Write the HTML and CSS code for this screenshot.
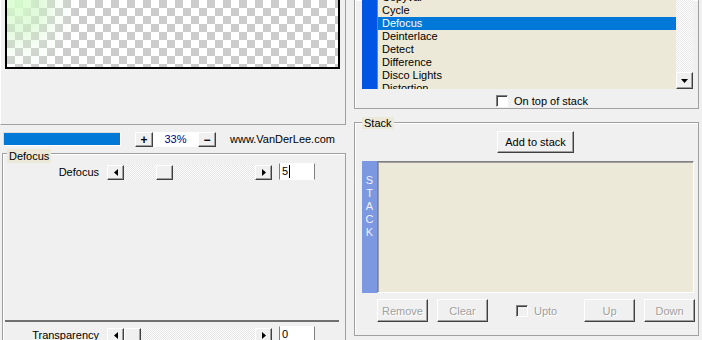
FILE: index.html
```html
<!DOCTYPE html>
<html lang="en">
<head>
    <meta charset="UTF-8">
    <title>Defocus</title>
    <link rel="stylesheet" href="styles.css">
</head>
<body>
    <div class="left">
        <div class="preview-panel">
            <div class="preview"></div>
        </div>

        <div class="zoom-row">
            <div class="progress"></div>
            <button class="btn small plus">+</button>
            <span class="pct">33%</span>
            <button class="btn small minus">&minus;</button>
            <span class="site">www.VanDerLee.com</span>
        </div>

        <div class="group params">
            <span class="legend">Defocus</span>
            <div class="param">
                <label class="param-label">Defocus</label>
                <div class="scroll">
                    <span class="btn arrow"><svg width="4" height="7"><polygon points="4,0 0,3.5 4,7"/></svg></span>
                    <span class="track"><span class="btn thumb" style="margin-left: 32px"></span></span>
                    <span class="btn arrow"><svg width="4" height="7"><polygon points="0,0 4,3.5 0,7"/></svg></span>
                </div>
                <div class="edit">5<span class="caret"></span></div>
            </div>
            <div class="separator"></div>
            <div class="param bottom">
                <label class="param-label">Transparency</label>
                <div class="scroll">
                    <span class="btn arrow"><svg width="4" height="7"><polygon points="4,0 0,3.5 4,7"/></svg></span>
                    <span class="track"><span class="btn thumb" style="margin-left: 0px"></span></span>
                    <span class="btn arrow"><svg width="4" height="7"><polygon points="0,0 4,3.5 0,7"/></svg></span>
                </div>
                <div class="edit">0</div>
            </div>
        </div>
    </div>

    <div class="right">
        <div class="group effects">
            <div class="list-box">
                <div class="strip"></div>
                <div class="items">
                    <div class="item">Copyvar</div>
                    <div class="item">Cycle</div>
                    <div class="item selected">Defocus</div>
                    <div class="item">Deinterlace</div>
                    <div class="item">Detect</div>
                    <div class="item">Difference</div>
                    <div class="item">Disco Lights</div>
                    <div class="item">Distortion</div>
                </div>
                <div class="vscroll">
                    <div class="vtrack"></div>
                    <span class="btn down"><svg width="7" height="4"><polygon points="0,0 7,0 3.5,4"/></svg></span>
                </div>
            </div>
            <div class="ontop">
                <span class="check"></span>
                <span>On top of stack</span>
            </div>
        </div>

        <div class="group stack">
            <span class="legend">Stack</span>
            <button class="btn add">Add to stack</button>
            <div class="stack-list">
                <div class="stack-strip">
                    <div>S</div>
                    <div>T</div>
                    <div>A</div>
                    <div>C</div>
                    <div>K</div>
                </div>
                <div class="stack-items"></div>
            </div>
            <div class="stack-buttons">
                <button class="btn wide disabled">Remove</button>
                <button class="btn wide disabled gap">Clear</button>
                <span class="upto">
                    <span class="check off"></span>
                    <span class="disabled-text">Upto</span>
                </span>
                <button class="btn wide disabled">Up</button>
                <button class="btn wide disabled gap">Down</button>
            </div>
        </div>
    </div>
</body>
</html>
```

FILE: styles.css
```css
* {
    box-sizing: border-box;
}

body {
    margin: 0;
    width: 702px;
    height: 340px;
    overflow: hidden;
    display: flex;
    background-color: #f0f0f0;
    font-family: "Liberation Sans", Arial, sans-serif;
    font-size: 11px;
    color: #000;
}

/* classic raised button */
.btn {
    display: flex;
    align-items: center;
    justify-content: center;
    flex-shrink: 0;
    padding: 0;
    font-family: inherit;
    font-size: 11px;
    color: #000;
    background-color: #f0f0f0;
    border: 1px solid;
    border-color: #fff #404040 #404040 #fff;
    box-shadow: inset -1px -1px 0 #a0a0a0;
}

.left {
    width: 346px;
    flex-shrink: 0;
    display: flex;
    flex-direction: column;
}

.preview-panel {
    height: 125px;
    flex-shrink: 0;
    padding-left: 4px;
    border-left: 1px solid #fff;
    border-right: 1px solid #a0a0a0;
    border-bottom: 1px solid #a0a0a0;
}

.preview {
    width: 335px;
    height: 69px;
    border: 2px solid #000;
    border-top: none;
    background-color: #fff;
    background-image:
        radial-gradient(ellipse 58px 72px at 12px 2px, rgba(215, 255, 205, 0.9), rgba(205, 245, 195, 0.55) 40%, rgba(225, 250, 220, 0.25) 70%, rgba(235, 255, 235, 0) 100%),
        conic-gradient(#ccc 25%, #fff 0 50%, #ccc 0 75%, #fff 0);
    background-size: 100% 100%, 16px 16px;
    background-repeat: no-repeat, repeat;
}

.zoom-row {
    height: 28px;
    flex-shrink: 0;
    display: flex;
    align-items: flex-start;
    padding: 7px 0 0 3px;
}

.progress {
    width: 118px;
    height: 14px;
    background-color: #0078d7;
    border: 1px solid;
    border-color: #dcdcdc #fff #fff #dcdcdc;
}

.btn.small {
    width: 18px;
    height: 15px;
    margin-left: 14px;
    font-weight: bold;
    font-size: 12px;
}

.btn.minus {
    margin-left: 0;
}

.pct {
    width: 45px;
    height: 15px;
    line-height: 15px;
    text-align: center;
    background-color: #fff;
    color: #000080;
}

.site {
    margin-left: 14px;
    line-height: 15px;
}

.group {
    position: relative;
    flex-shrink: 0;
    border: 1px solid #a0a0a0;
    box-shadow: inset 1px 1px 0 #fff;
}

.legend {
    position: absolute;
    background-color: #ece9d8;
    padding: 0 2px;
}

.params {
    flex: 1 0 auto;
    margin-left: 2px;
    border-bottom: none;
}

.params .legend {
    left: 4px;
    top: -5px;
    height: 14px;
    line-height: 14px;
}

.param {
    display: flex;
    align-items: flex-end;
    height: 17px;
    margin-top: 9px;
}

.param.bottom {
    margin-top: 4px;
}

.param-label {
    width: 96px;
    margin-right: 8px;
    text-align: right;
    line-height: 15px;
    white-space: nowrap;
}

.scroll {
    display: flex;
    width: 165px;
    height: 15px;
}

.btn.arrow {
    width: 17px;
    height: 15px;
}

.track {
    flex: 1;
    display: flex;
    background-image: repeating-conic-gradient(#fff 0 25%, #e4e4e4 0 50%);
    background-size: 2px 2px;
}

.btn.thumb {
    width: 17px;
    height: 15px;
}

.edit {
    width: 36px;
    height: 17px;
    margin-left: 7px;
    padding-left: 2px;
    line-height: 15px;
    background-color: #fff;
    border: 1px solid #fff;
    border-left-color: #808080;
    border-right-color: #808080;
    display: flex;
    align-items: center;
}

.caret {
    display: inline-block;
    width: 1px;
    height: 13px;
    margin-left: 1px;
    background-color: #000;
}

.separator {
    width: 334px;
    height: 2px;
    margin: 140px 0 0 2px;
    background-color: #707070;
}

.right {
    width: 356px;
    display: flex;
    flex-direction: column;
    padding-left: 8px;
}

.effects {
    width: 345px;
    height: 109px;
    padding-left: 7px;
    border-top: none;
}

.list-box {
    display: flex;
    width: 331px;
    height: 89px;
}

.strip {
    width: 15px;
    background-color: #0055e5;
}

.items {
    flex: 1;
    overflow: hidden;
    background-color: #ece9d8;
    border-left: 1px solid #808080;
}

.item {
    height: 13px;
    line-height: 13px;
    padding-left: 4px;
    white-space: nowrap;
}

.item:first-child {
    margin-top: -9px;
}

.item.selected {
    background-color: #0078d7;
    color: #fff;
}

.vscroll {
    width: 17px;
    display: flex;
    flex-direction: column;
}

.vtrack {
    flex: 1;
    background-image: repeating-conic-gradient(#fff 0 25%, #e8e8e8 0 50%);
    background-size: 2px 2px;
}

.btn.down {
    height: 17px;
}

.ontop {
    display: flex;
    align-items: center;
    margin-top: 6px;
    padding-left: 134px;
    gap: 6px;
}

.check {
    width: 12px;
    height: 12px;
    background-color: #fff;
    border: 1px solid;
    border-color: #808080 #fff #fff #808080;
    box-shadow: inset 1px 1px 0 #404040;
}

.check.off {
    background-color: #f0f0f0;
}

.stack {
    width: 345px;
    height: 214px;
    margin-top: 13px;
    padding-left: 7px;
}

.stack .legend {
    left: 7px;
    top: -6px;
    height: 12px;
    line-height: 12px;
}

.btn.add {
    width: 77px;
    height: 22px;
    margin: 8px 0 0 135px;
}

.stack-list {
    display: flex;
    width: 332px;
    height: 132px;
    margin-top: 8px;
}

.stack-strip {
    width: 15px;
    padding-top: 13px;
    line-height: 13px;
    text-align: center;
    color: rgba(255, 255, 255, 0.9);
    background-color: #7b98e0;
}

.stack-items {
    flex: 1;
    background-color: #ece9d8;
    border: 1px solid;
    border-color: #808080 #fff #fff #808080;
    box-shadow: inset 1px 1px 0 #a0a0a0;
}

.stack-buttons {
    display: flex;
    align-items: center;
    margin-top: 6px;
    padding-left: 15px;
}

.btn.wide {
    width: 51px;
    height: 23px;
}

.btn.gap {
    margin-left: 9px;
}

.disabled,
.disabled-text {
    color: #a0a0a0;
    text-shadow: 1px 1px 0 #fff;
}

.upto {
    width: 96px;
    display: flex;
    align-items: center;
    gap: 6px;
    padding-left: 28px;
}
```
